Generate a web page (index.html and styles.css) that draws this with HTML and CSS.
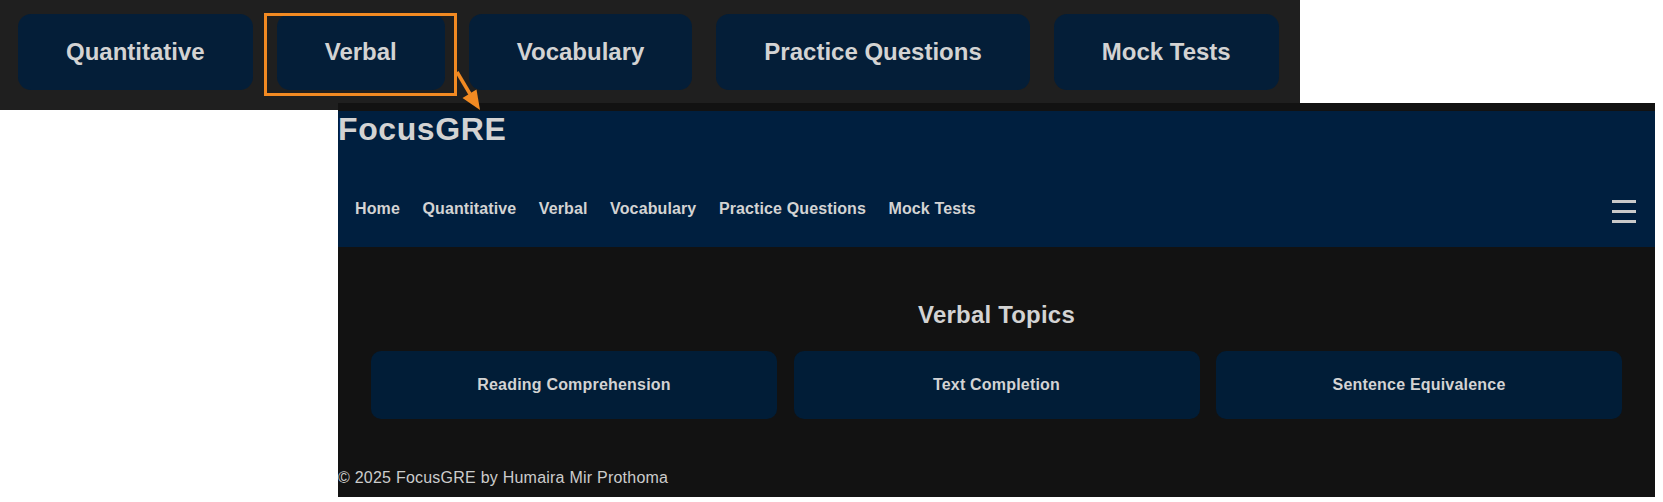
FILE: index.html
```html
<!DOCTYPE html>
<html lang="en">
<head>
<meta charset="utf-8">
<title>FocusGRE – Verbal</title>
<link rel="stylesheet" href="styles.css">
</head>
<body>
<div class="canvas">
  <div class="strip">
    <a class="pill" href="#">Quantitative</a>
    <a class="pill" href="#">Verbal</a>
    <a class="pill" href="#">Vocabulary</a>
    <a class="pill" href="#">Practice Questions</a>
    <a class="pill" href="#">Mock Tests</a>
  </div>

  <div class="shot">
    <header class="site-header">
      <h1 class="logo">FocusGRE</h1>
      <nav class="nav">
        <ul class="nav-links">
          <li><a href="#">Home</a></li>
          <li><a href="#">Quantitative</a></li>
          <li><a href="#">Verbal</a></li>
          <li><a href="#">Vocabulary</a></li>
          <li><a href="#">Practice Questions</a></li>
          <li><a href="#">Mock Tests</a></li>
        </ul>
        <div class="burger" aria-label="Menu"><span></span><span></span><span></span></div>
      </nav>
    </header>
    <main class="topics">
      <h2 class="topics-title">Verbal Topics</h2>
      <div class="topic-grid">
        <a class="topic-card" href="#">Reading Comprehension</a>
        <a class="topic-card" href="#">Text Completion</a>
        <a class="topic-card" href="#">Sentence Equivalence</a>
      </div>
    </main>
    <footer class="site-footer">© 2025 FocusGRE by Humaira Mir Prothoma</footer>
  </div>

  <div class="callout"></div>
  <svg class="arrow" viewBox="0 0 1663 502" width="1663" height="502">
    <line x1="457" y1="72" x2="470" y2="94" stroke="#f28a22" stroke-width="3.5" stroke-linecap="butt"/>
    <polygon points="462.5,98 476.5,89.5 480,110" fill="#f28a22"/>
  </svg>
</div>
</body>
</html>
```

FILE: styles.css
```css
* {
  box-sizing: border-box;
}

body {
  margin: 0;
  background: #ffffff;
  font-family: "Liberation Sans", Arial, sans-serif;
}

.canvas {
  position: relative;
  width: 1663px;
  height: 502px;
  overflow: hidden;
}

/* top strip of buttons */
.strip {
  width: 1300px;
  height: 110px;
  background: #1f1f1f;
  display: flex;
  align-items: flex-start;
  gap: 24px;
  padding: 14px 18px;
}

.pill {
  display: block;
  padding: 24px 48px;
  border-radius: 13px;
  background: #041e38;
  color: #d3d3d3;
  font-size: 24px;
  font-weight: bold;
  line-height: normal;
  text-decoration: none;
  white-space: nowrap;
}

/* embedded page screenshot */
.shot {
  width: 1317px;
  height: 394px;
  margin: -7px 0 0 338px;
  padding-top: 8px;
  background: #121212;
  color: #d3d3d3;
}

.site-header {
  height: 136px;
  background: #001f3f;
}

.logo {
  margin: 0;
  font-size: 32px;
  font-weight: bold;
  line-height: normal;
  letter-spacing: 0.6px;
  color: #d3d3d3;
}

.nav {
  display: flex;
  align-items: flex-start;
  padding: 52px 19px 0 17px;
}

.nav-links {
  display: flex;
  gap: 22.5px;
  margin: 0;
  padding: 0;
  list-style: none;
}

.nav-links a {
  color: #d3d3d3;
  font-size: 16px;
  font-weight: bold;
  letter-spacing: 0.12px;
  text-decoration: none;
  line-height: normal;
}

.burger {
  margin-left: auto;
  width: 24px;
  height: 23px;
  display: flex;
  flex-direction: column;
  justify-content: space-between;
}

.burger span {
  display: block;
  height: 3px;
  background: #c9c9c9;
}

.topics {
  padding: 54px 33px 0;
}

.topics-title {
  margin: 0 0 22px;
  text-align: center;
  font-size: 24px;
  font-weight: bold;
  line-height: normal;
  letter-spacing: 0.2px;
  color: #d3d3d3;
}

.topic-grid {
  display: grid;
  grid-template-columns: repeat(3, 1fr);
  gap: 16.5px;
}

.topic-card {
  display: block;
  padding: 25px 0;
  border-radius: 10px;
  background: #011d37;
  color: #d3d3d3;
  font-size: 16px;
  font-weight: bold;
  line-height: normal;
  letter-spacing: 0.2px;
  text-align: center;
  text-decoration: none;
}

.site-footer {
  margin-top: 49.5px;
  font-size: 16px;
  line-height: normal;
  letter-spacing: 0.23px;
  color: #cccccc;
}

/* annotation overlay */
.callout {
  position: absolute;
  left: 264px;
  top: 13px;
  width: 193px;
  height: 83px;
  border: 3px solid #f28a22;
}

.arrow {
  position: absolute;
  left: 0;
  top: 0;
  pointer-events: none;
}
```
